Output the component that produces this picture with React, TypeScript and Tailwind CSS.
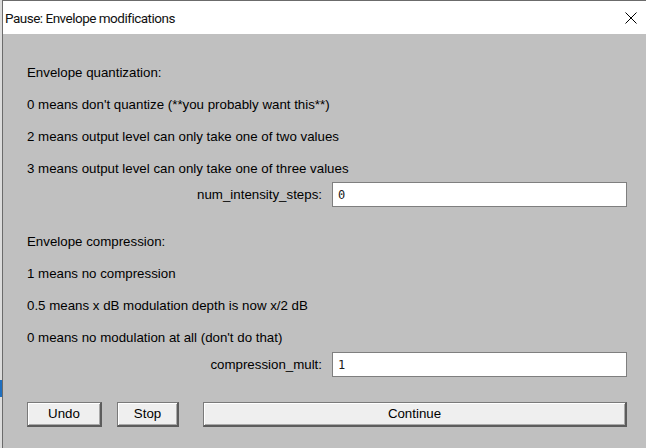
const body = "font-['Liberation_Sans',Arial,sans-serif] text-[13.3px] leading-[16px] text-black";

const TextBlock = ({ lines }: { lines: string[] }) => (
  <div className="flex flex-col gap-[16px] pl-[24px]">
    {lines.map((l) => (
      <div key={l} className="h-[16px] whitespace-pre">
        {l}
      </div>
    ))}
  </div>
);

const Field = ({ label, value, className }: { label: string; value: string; className: string }) => (
  <div className={`flex items-center justify-end gap-[10px] pr-[19px] ${className}`}>
    <span>{label}</span>
    <div className="w-[295px] h-[25px] bg-white border border-[#7f7f7f] flex items-center pl-[5px] font-['DejaVu_Sans_Mono',monospace] text-[12px] text-[#1a1a1a]">
      {value}
    </div>
  </div>
);

const Btn = ({ label, className }: { label: string; className: string }) => (
  <button
    className={`h-[25px] bg-[#efefef] border-t border-l border-r-2 border-b-2 border-t-[#7a7a7a] border-l-[#7a7a7a] border-r-[#5c5c5c] border-b-[#5c5c5c] shadow-[inset_1px_1px_0_#ffffff,inset_-1px_-1px_0_#a9a9a9] flex items-center justify-center ${className}`}
  >
    {label}
  </button>
);

export default function App() {
  return (
    <div className="w-[646px] h-[448px] flex overflow-hidden bg-white">
      <div className="w-[2px] flex flex-col bg-[#dcdcdc]">
        <div className="h-[380px]" />
        <div className="h-[17px] bg-[#1f6fbf]" />
      </div>
      <div className="flex-1 flex flex-col border-t border-l border-[#6b6b6b]">
        <div className="h-[33px] bg-white flex items-center justify-between pl-[2px] pr-[9px]">
          <span className="font-['Roboto',sans-serif] text-[13.5px] text-[#111] tracking-[-0.5px] pt-[1px]">
            Pause: Envelope modifications
          </span>
          <svg width="12" height="12" viewBox="0 0 12 12">
            <path d="M0.5 0.5 L11.5 11.5 M11.5 0.5 L0.5 11.5" stroke="#000" strokeWidth="1" />
          </svg>
        </div>
        <div className={`flex-1 bg-[#c0c0c0] flex flex-col pt-[31px] ${body}`}>
          <TextBlock
            lines={[
              "Envelope quantization:",
              "0 means don't quantize (**you probably want this**)",
              "2 means output level can only take one of two values",
              "3 means output level can only take one of three values",
            ]}
          />
          <Field label="num_intensity_steps:" value="0" className="mt-[5px]" />
          <div className="mt-[27px]">
            <TextBlock
              lines={[
                "Envelope compression:",
                "1 means no compression",
                "0.5 means x dB modulation depth is now x/2 dB",
                "0 means no modulation at all (don't do that)",
              ]}
            />
          </div>
          <Field label="compression_mult:" value="1" className="mt-[6px]" />
          <div className="flex mt-[25px] pl-[24px] pr-[19px]">
            <Btn label="Undo" className="w-[75px]" />
            <Btn label="Stop" className="w-[62px] ml-[15px]" />
            <Btn label="Continue" className="flex-1 ml-[24px]" />
          </div>
        </div>
      </div>
    </div>
  );
}
